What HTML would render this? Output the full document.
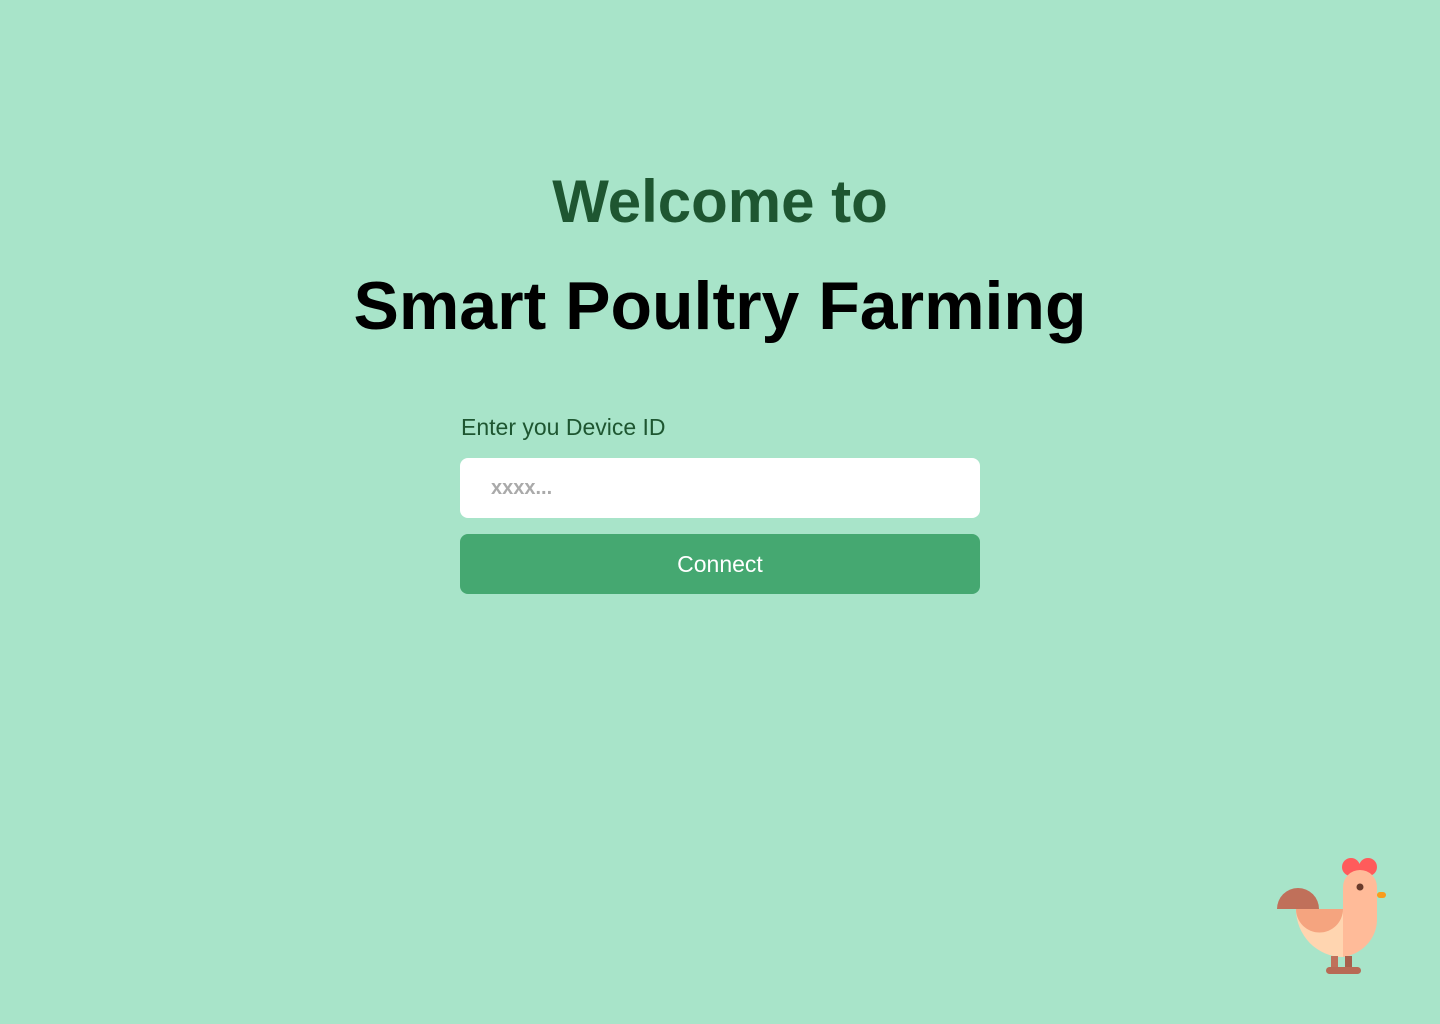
<!DOCTYPE html>
<html><head><style>
body{margin:0;width:1440px;height:1024px;background:#a8e4c9;font-family:"Liberation Sans",sans-serif;position:relative;overflow:hidden}
.t1{position:absolute;top:164px;left:0;width:1440px;text-align:center;font-size:60px;font-weight:bold;color:#1e5631;line-height:76px}
.t2{position:absolute;top:266px;left:0;width:1440px;text-align:center;font-size:68px;font-weight:bold;color:#000;line-height:80px}
.lbl{position:absolute;left:461px;top:413px;font-size:23px;color:#1e5631;line-height:28px}
.inp{position:absolute;left:460px;top:458px;width:520px;height:60px;background:#fff;border-radius:8px}
.inp span{position:absolute;left:31px;top:19px;font-size:20px;color:#aaa;font-weight:bold}
.btn{position:absolute;left:460px;top:534px;width:520px;height:60px;background:#45a871;border-radius:8px;color:#fff;font-size:23px;text-align:center;line-height:60px}
</style></head><body>
<div class="t1">Welcome to</div>
<div class="t2">Smart Poultry Farming</div>
<div class="lbl">Enter you Device ID</div>
<div class="inp"><span>xxxx...</span></div>
<div class="btn">Connect</div>
<svg style="position:absolute;left:0;top:0" width="1440" height="1024">
<circle cx="1351" cy="867" r="9" fill="#ff5b5b"/><circle cx="1368" cy="867" r="9" fill="#ff5b5b"/>
<rect x="1377" y="892" width="9" height="6" rx="3" fill="#f99c1c"/>
<path d="M1277 909 A21 21 0 0 1 1319 909 Z" fill="#c0705a"/>
<path d="M1343 887 A17 17 0 0 1 1377 887 L1377 920 A40 38 0 0 1 1343 957 Z" fill="#ffbb99"/>
<path d="M1343 909 L1343 957 A47 48 0 0 1 1296 909 Z" fill="#ffd5b0"/>
<path d="M1296 909 L1343 909 A23 23 0 0 1 1296 909 Z" fill="#f5a47f"/>
<circle cx="1360" cy="887" r="3.5" fill="#6a3a2a"/>
<rect x="1331" y="956" width="7" height="12" fill="#c0705a"/><rect x="1345" y="956" width="7" height="12" fill="#a8604c"/>
<rect x="1326" y="967" width="35" height="7" rx="3.5" fill="#b86a55"/>
</svg>
</body></html>
